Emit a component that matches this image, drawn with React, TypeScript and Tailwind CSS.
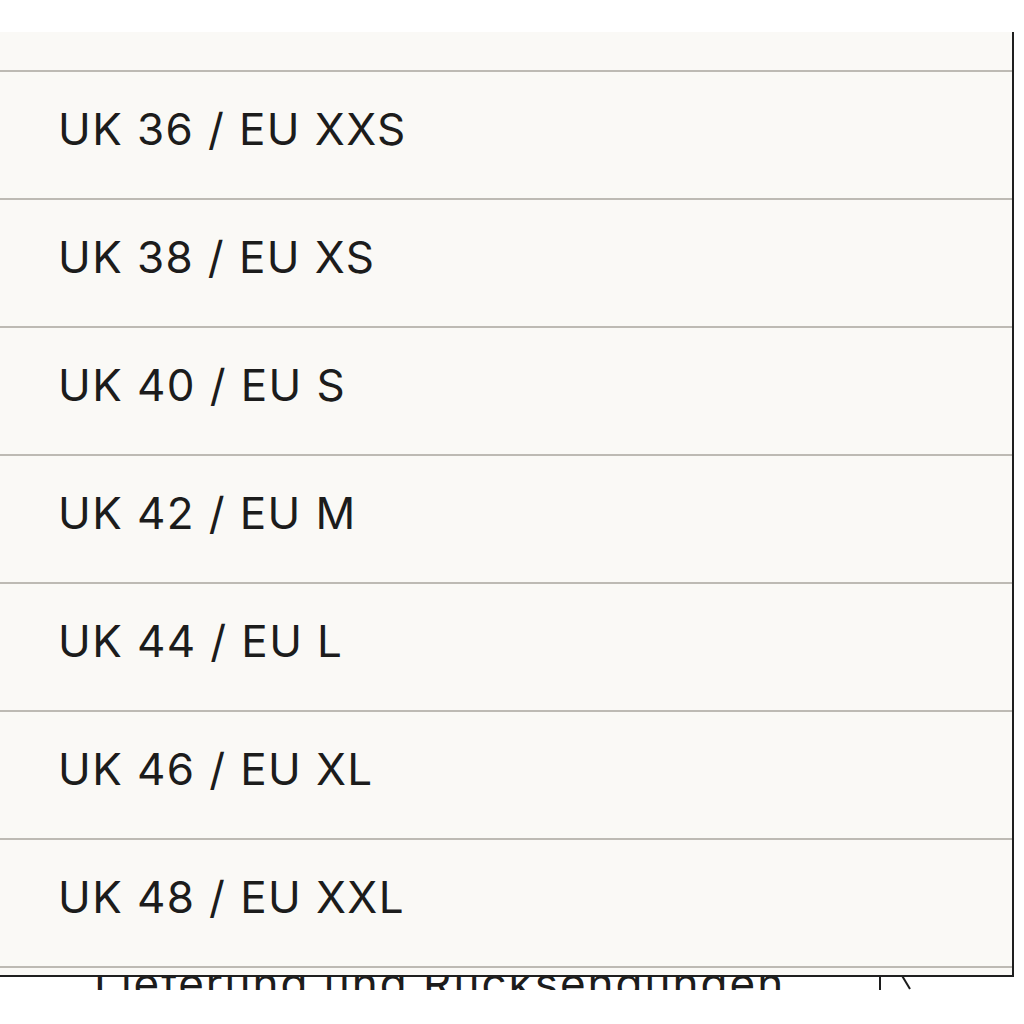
const SIZES = [
  'UK 36 / EU XXS',
  'UK 38 / EU XS',
  'UK 40 / EU S',
  'UK 42 / EU M',
  'UK 44 / EU L',
  'UK 46 / EU XL',
  'UK 48 / EU XXL',
];

export default function App() {
  return (
    <div className="w-[1024px] h-[1024px] bg-white overflow-hidden pt-[32px] text-[#1c1c1c]" style={{ fontFamily: 'Inter, "Noto Sans", sans-serif' }}>
      {/* size picker */}
      <div className="w-[1014px] bg-[#faf9f6] border-r-2 border-b-2 border-[#1f1f1f]">
        <div className="h-[38px]" />
        {SIZES.map((s) => (
          <div key={s} className="h-[128px] border-t-2 border-[#bdbab4] flex items-center pl-[58px] pb-[12px]">
            <span className="text-[44px] leading-none tracking-[1.4px]">{s}</span>
          </div>
        ))}
        <div className="h-[9px] border-t-2 border-[#bdbab4]" />
      </div>

      {/* row behind the picker */}
      <div className="h-[13px] overflow-hidden flex">
        <div className="flex w-full -mt-[16px] pl-[94px]">
          <span className="text-[44px] leading-none tracking-[2px] whitespace-nowrap">Lieferung und Rücksendungen</span>
          <svg className="ml-auto mr-[110px] mt-[6px]" width="40" height="40" viewBox="0 0 40 40" fill="none" stroke="#1c1c1c" strokeWidth="2">
            <path d="M6 0 V40" />
            <path d="M24 2 L36 22" />
          </svg>
        </div>
      </div>
    </div>
  );
}
